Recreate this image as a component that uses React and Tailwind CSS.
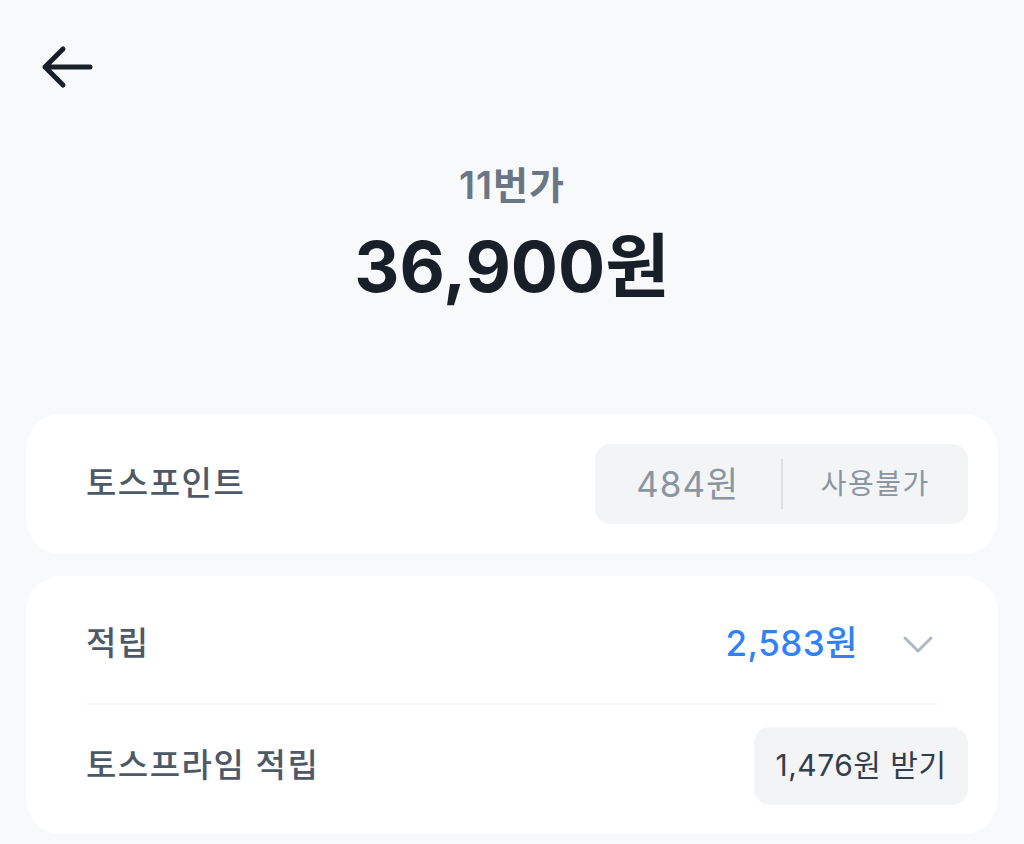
const font = { fontFamily: 'Inter, "Noto Sans CJK KR", "Noto Sans", sans-serif' };

const BackArrow = () => (
  <svg width="54" height="48" viewBox="0 0 54 48" fill="none">
    <path
      d="M50 23H5M23 5L5 23l18 18"
      stroke="#191f28"
      strokeWidth="5"
      strokeLinecap="round"
      strokeLinejoin="round"
    />
  </svg>
);

const Chevron = () => (
  <svg width="32" height="20" viewBox="0 0 32 20" fill="none">
    <path d="M3 4l13 13L29 4" stroke="#b0b8c1" strokeWidth="3" strokeLinecap="round" strokeLinejoin="round" />
  </svg>
);

export default function App() {
  return (
    <div className="min-h-[844px] w-[1024px] bg-[#f8f9fb] overflow-hidden" style={font}>
      <div className="pl-[40px] pt-[44px] h-[140px]">
        <BackArrow />
      </div>

      <div className="flex flex-col items-center">
        <p className="text-[38px] font-semibold text-[#6b7684] leading-none mt-[26px] tracking-[1px]">11번가</p>
        <p className="text-[70px] font-bold text-[#191f28] leading-none mt-[28px]">36,900원</p>
      </div>

      <div className="mx-[26px] mt-[112px] bg-white rounded-[36px] h-[140px] flex items-center justify-between pl-[60px] pr-[30px]">
        <span className="text-[33px] font-medium text-[#4e5968] tracking-[1.5px]">토스포인트</span>
        <div className="h-[80px] w-[373px] bg-[#f2f4f6] rounded-[16px] flex items-center">
          <span className="flex-1 text-center text-[35px] text-[#8b95a1] tracking-[1px]">484원</span>
          <span className="w-[2px] h-[50px] bg-[#dde1e6]" />
          <span className="flex-1 text-center text-[28px] text-[#8b95a1] tracking-[1.5px]">사용불가</span>
        </div>
      </div>

      <div className="mx-[26px] mt-[22px] bg-white rounded-[36px] h-[258px] flex flex-col">
        <div className="h-[127px] flex items-center justify-between pl-[60px] pr-[64px] pt-[8px]">
          <span className="text-[33px] font-medium text-[#4e5968] tracking-[1.5px]">적립</span>
          <div className="flex items-center gap-[44px]">
            <span className="text-[35px] font-medium text-[#3182f6] tracking-[0.5px]">2,583원</span>
            <Chevron />
          </div>
        </div>
        <div className="mx-[60px] h-[2px] bg-[#f6f7f9]" />
        <div className="flex-1 flex items-center justify-between pl-[60px] pr-[30px] pb-[8px]">
          <span className="text-[33px] font-medium text-[#4e5968] tracking-[1.5px]">토스프라임 적립</span>
          <div className="h-[78px] w-[214px] bg-[#f2f4f6] rounded-[16px] flex items-center justify-center">
            <span className="text-[30px] text-[#333d4b] tracking-[0.5px]">1,476원 받기</span>
          </div>
        </div>
      </div>
    </div>
  );
}
